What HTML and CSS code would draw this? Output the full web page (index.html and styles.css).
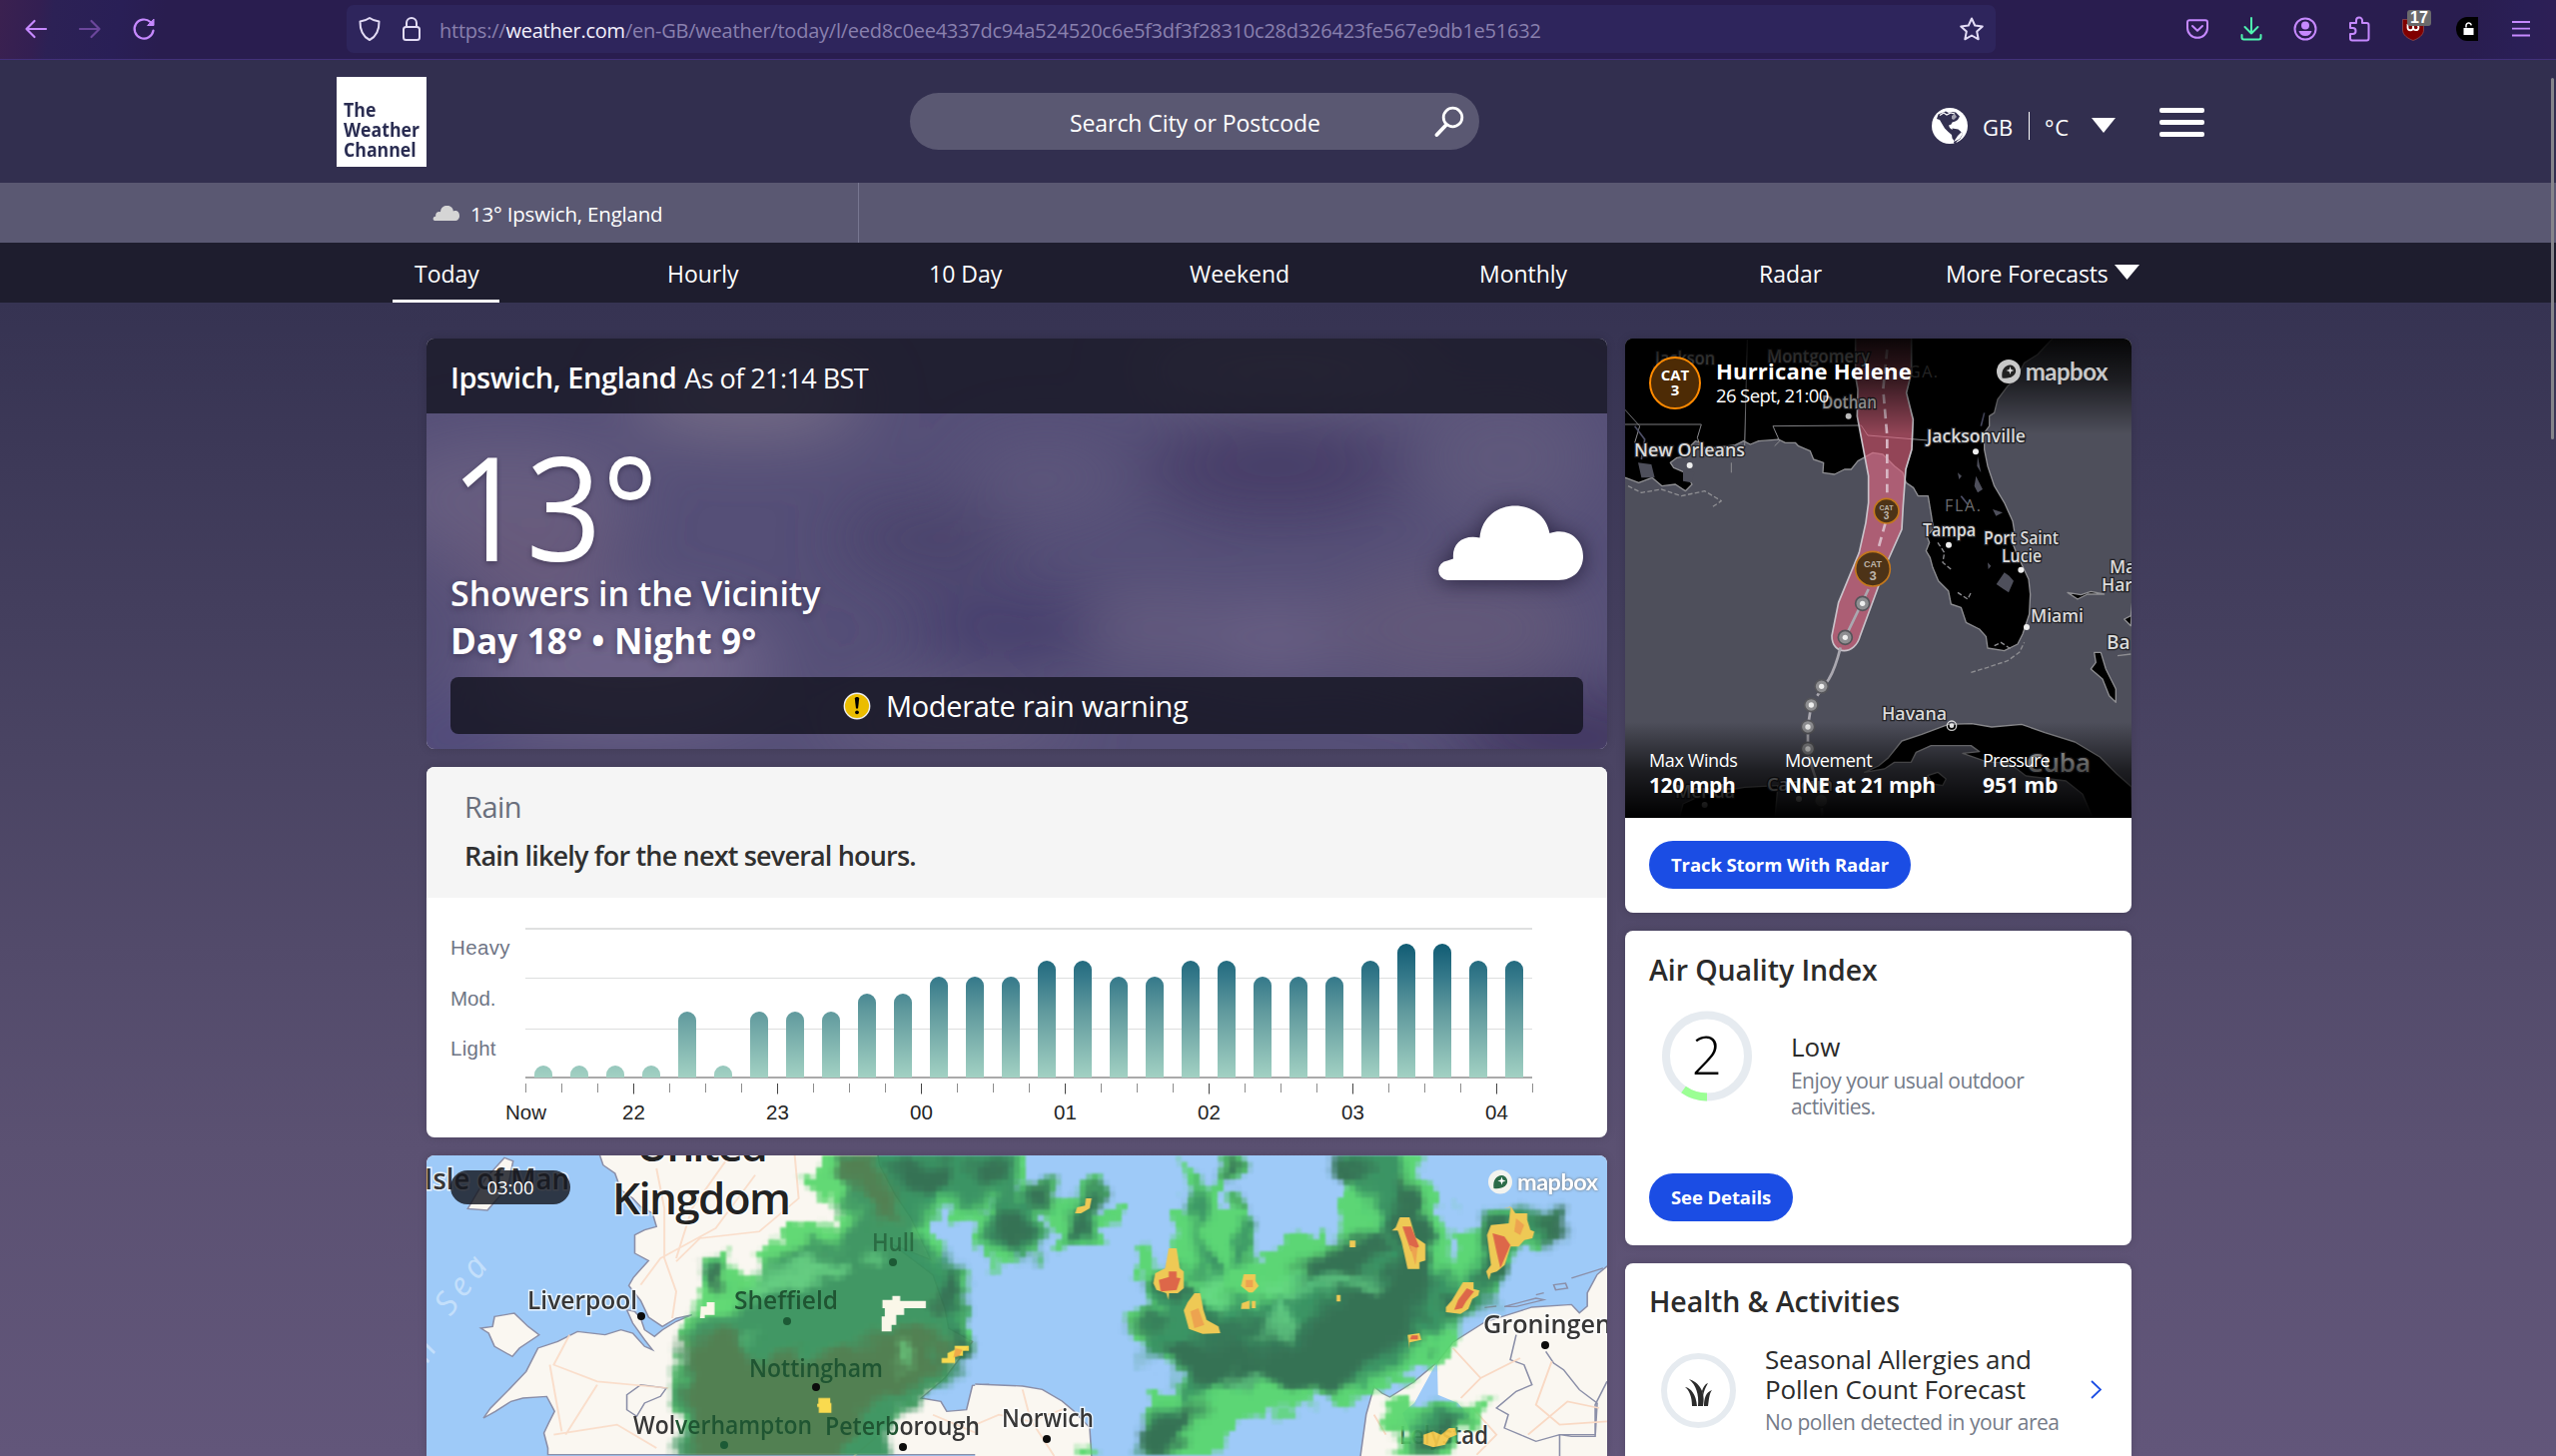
FILE: index.html
```html
<!DOCTYPE html>
<html lang="en-GB">
<head>
<meta charset="utf-8">
<title>Weather today in Ipswich, England</title>
<link rel="stylesheet" href="styles.css">
</head>
<body>
<div class="browser-bar">
  <div class="nav-buttons">
    <svg width="24" height="24" viewBox="0 0 24 24" fill="none" stroke="#c689ff" stroke-width="2.2" stroke-linecap="round" stroke-linejoin="round"><path d="M22 12H2.500M10.500 4l-8 8 8 8"/></svg>
    <svg width="24" height="24" viewBox="0 0 24 24" fill="none" stroke="#6b469b" stroke-width="2.2" stroke-linecap="round" stroke-linejoin="round"><path d="M2 12h19.500M13.500 4l8 8-8 8"/></svg>
    <svg width="24" height="24" viewBox="0 0 24 24" fill="none" stroke="#c689ff" stroke-width="2.200" stroke-linecap="round" stroke-linejoin="round"><path d="M21.500 13.500A9.500 9.500 0 1 1 18.500 5L21 7.500"/><path d="M22 2.500v6h-6z" fill="#c689ff" stroke-width="1"/></svg>
  </div>
  <div class="url-bar">
    <svg width="24" height="26" viewBox="0 0 24 26" fill="none" stroke="#e3dcf5" stroke-width="2" stroke-linejoin="round"><path d="M12 2c3 2.200 6 3 9.500 3.400C21.700 14 19.500 20 12 24 4.500 20 2.300 14 2.500 5.400 6 5 9 4.200 12 2z"/></svg>
    <svg width="20" height="26" viewBox="0 0 20 26" fill="none" stroke="#e3dcf5" stroke-width="2"><rect x="2" y="11" width="16" height="13" rx="2.500"/><path d="M5 11V7a5 5 0 0 1 10 0v4"/></svg>
    <span class="url">https://<b>weather.com</b>/en-GB/weather/today/l/eed8c0ee4337dc94a524520c6e5f3df3f28310c28d326423fe567e9db1e51632</span>
    <svg class="star" width="26" height="26" viewBox="0 0 26 26" fill="none" stroke="#e3dcf5" stroke-width="2" stroke-linejoin="round"><path d="M13 2.500l3.200 7 7.600.9-5.600 5.200 1.500 7.700L13 19.500l-6.700 3.800 1.500-7.700-5.600-5.200 7.600-.9z"/></svg>
  </div>
  <div class="tools">
    <span><svg width="22" height="20" viewBox="0 0 22 20" fill="none" stroke="#c689ff" stroke-width="2" stroke-linecap="round" stroke-linejoin="round"><path d="M3 1.200h16a2 2 0 0 1 2 2V9a10 9.800 0 0 1-20 0V3.200a2 2 0 0 1 2-2z"/><path d="M6 7l5 4.700L16 7"/></svg></span>
    <span><svg width="22" height="24" viewBox="0 0 22 24" fill="none" stroke="#4ff5b0" stroke-width="2" stroke-linecap="round" stroke-linejoin="round"><path d="M11 1v15.500M4.500 10l6.500 6.500 6.500-6.500M1.500 18v2.500a2 2 0 0 0 2 2h15a2 2 0 0 0 2-2V18"/></svg></span>
    <span><svg width="24" height="24" viewBox="0 0 24 24" fill="#c689ff"><circle cx="12" cy="12" r="10.500" fill="none" stroke="#c689ff" stroke-width="2"/><circle cx="12" cy="8.500" r="4"/><path d="M5.500 14h13a6.700 6.700 0 0 1-13 0z"/></svg></span>
    <span><svg width="22" height="26" viewBox="0 0 22 26" fill="none" stroke="#c689ff" stroke-width="2" stroke-linejoin="round"><path d="M2 7h6V4.500a3 3 0 0 1 6 0V7h4.500a2 2 0 0 1 2 2v13.500a2 2 0 0 1-2 2H4a2 2 0 0 1-2-2V18h2.500a3 3 0 0 0 0-6H2z"/></svg></span>
    <span class="shield"><svg width="22" height="24" viewBox="0 0 22 24"><path d="M.5 2.500h21V13c0 5-5 8.500-10.500 10.500C5.500 21.500.5 18 .5 13z" fill="#800000" stroke="#a06060" stroke-width=".6"/><path d="M5.500 7v3.500a2.700 2.700 0 0 0 5.500 0V8m0 2.500a2.700 2.700 0 1 0 3-2.700" fill="none" stroke="#fff" stroke-width="1.800"/></svg><i>17</i></span>
    <span><svg width="22" height="24" viewBox="0 0 22 24"><path d="M22 0H11A11 12 0 0 0 11 24H22z"/><rect x="7.500" y="11" width="10" height="7" fill="#fff"/><path d="M10 10.500V9a2.600 2.600 0 0 1 5.200-.6" fill="none" stroke="#fff" stroke-width="1.500"/></svg></span>
    <span><svg width="18" height="16" viewBox="0 0 18 16" stroke="#c689ff" stroke-width="1.800"><path d="M0 1h18M0 7.700h18M0 14.500h18"/></svg></span>
  </div>
</div>

<header class="site-head">
  <div class="logo"><span>The<br>Weather<br>Channel</span></div>
  <div class="search"><span class="search-text">Search City or Postcode</span>
    <svg width="30" height="32" viewBox="0 0 30 32" fill="none" stroke="#fff" stroke-linecap="round"><circle cx="18.500" cy="11.500" r="9.300" stroke-width="2.800"/><path d="M11.500 19.500L2.500 29" stroke-width="3.800"/></svg>
  </div>
  <div class="locale">
    <svg class="globe" width="36" height="36" viewBox="0 0 36 36"><circle cx="18" cy="18" r="18" fill="#fff"/><path d="M6.500 6.500L14 3.500l3 1.500 3-1 4 .5 2 2 2 2-2 3.500-2.500 1.500-3 1-1 2-2.500 1 1 2.500 2.500 2 3 .5 3 2 4 2.500-2 4-3.500 2.500-1.500 3.500-1.500 2.500 1-6-2.500-3-.5-3.500-3.500-3-3.500-3.500-3-5-2-3.500L5 11z" fill="#322f4f"/><path d="M8 7.500l4-2.500 3 2 4-2 4 1" stroke="#fff" stroke-width="1.200" fill="none"/><path d="M20 8l3-2 2 3-3 3-2-1z" fill="#fff" opacity=".55"/><path d="M20.500 20.500l6 1 4.500 4-3 4.500-3.500 4-2.500 1.500 1-7-2.500-4z" fill="#322f4f"/><path d="M22 34l4-6 4-4 1 2-3 5z" fill="#fff"/></svg>
    <span class="gb">GB</span><span class="rule"></span><span class="deg">°C</span>
    <svg class="tri" width="24" height="15"><path d="M0 0h24L12 15z" fill="#fff"/></svg>
    <div class="burger"><i></i><i></i><i></i></div>
  </div>
</header>

<div class="places">
  <div class="place"><svg width="27" height="15" viewBox="0 0 146 75" preserveAspectRatio="none"><path d="M11 75a10 10 0 0 1 6-20C15 35 28 27 43 31 45-10 108-12 113 27 138 20 146 36 146 51c0 12-8 24-26 24z" fill="#d5d5d5"/></svg><span class="place-text">13° Ipswich, England</span></div>
</div>

<nav class="tabs">
  <a class="on"><span>Today</span></a><a><span>Hourly</span></a><a><span>10 Day</span></a><a><span>Weekend</span></a><a><span>Monthly</span></a><a><span>Radar</span></a><a class="more"><span>More Forecasts</span><svg width="25" height="15"><path d="M0 0h25L12.500 15z" fill="#fff"/></svg></a>
</nav>

<main>
  <div class="left">
    <section class="card current">
      <svg class="sky" width="1182" height="411" viewBox="0 0 1182 411">
        <defs><filter id="soft" x="-50%" y="-50%" width="200%" height="200%"><feGaussianBlur stdDeviation="32"/></filter></defs>
        <rect width="1182" height="411" fill="#554f77"/>
        <g filter="url(#soft)">
          <ellipse cx="80" cy="160" rx="130" ry="60" fill="#665d80"/><ellipse cx="200" cy="330" rx="150" ry="60" fill="#70658a"/>
          <ellipse cx="110" cy="220" rx="80" ry="50" fill="#685a7c"/><ellipse cx="320" cy="60" rx="120" ry="40" fill="#746c86"/>
          <ellipse cx="500" cy="200" rx="90" ry="35" fill="#48426b"/><ellipse cx="590" cy="290" rx="110" ry="35" fill="#453e6c"/>
          <ellipse cx="620" cy="140" rx="80" ry="35" fill="#5d567b"/><ellipse cx="850" cy="130" rx="130" ry="50" fill="#463e68"/>
          <ellipse cx="860" cy="30" rx="160" ry="25" fill="#706b86"/><ellipse cx="730" cy="290" rx="70" ry="30" fill="#665d80"/>
          <ellipse cx="850" cy="300" rx="80" ry="35" fill="#6b6084"/><ellipse cx="1080" cy="120" rx="90" ry="70" fill="#5f587c"/>
          <ellipse cx="1030" cy="290" rx="130" ry="60" fill="#625979"/><ellipse cx="1150" cy="400" rx="120" ry="40" fill="#40365f"/>
          <ellipse cx="20" cy="400" rx="70" ry="25" fill="#4f487d"/><ellipse cx="520" cy="385" rx="130" ry="25" fill="#665d80"/>
        </g>
      </svg>
      <div class="current-head"><h1 class="city">Ipswich, England</h1><span class="asof">As of 21:14 BST</span></div>
      <div class="current-body">
        <div class="facts">
          <div class="temp">13°</div>
          <div class="phrase">Showers in the Vicinity</div>
          <div class="hilo">Day 18° • Night 9°</div>
        </div>
        <svg class="cloud" width="146" height="75" viewBox="0 0 146 75"><path d="M10 74a9.800 9.800 0 0 1 0-19.500l6-2C14.500 38 25 28 42.500 31.500 46 -10 106 -11 112.500 27 132 20.500 146 34 146 50c0 13-9 24-25 24z" fill="#fff"/></svg>
      </div>
      <div class="warning"><svg width="28" height="28" viewBox="0 0 28 28"><circle cx="14" cy="14" r="12.700" fill="#ebbd00" stroke="#eee" stroke-width="1.400"/><path d="M11.800 6.500c0-2 4.400-2 4.400 0L15 16.500h-2z"/><circle cx="14" cy="20.300" r="1.900"/></svg><span class="warn-text">Moderate rain warning</span></div>
    </section>

    <section class="card rain">
      <div class="rain-head"><h2>Rain</h2><p>Rain likely for the next several hours.</p></div>
      <svg class="chart" width="1182" height="240" viewBox="427 899 1182 240">
        <defs><linearGradient id="bar" gradientUnits="userSpaceOnUse" x1="0" y1="945" x2="0" y2="1079"><stop offset="0" stop-color="#115c74"/><stop offset=".25" stop-color="#35798a"/><stop offset=".5" stop-color="#5f999d"/><stop offset="1" stop-color="#a2d1c3"/></linearGradient></defs>
        <path d="M526 930h1008" stroke="#dfe0e0" stroke-width="2"/><path d="M526 979.500h1008M526 1030.500h1008" stroke="#dddede"/><path d="M526 1079h1008" stroke="#aaa" stroke-width="2"/>
        <g class="axis-y"><text x="451" y="956" textLength="59.500">Heavy</text><text x="451" y="1007" textLength="45.500">Mod.</text><text x="451" y="1057" textLength="45.500">Light</text></g>
        <g id="bars" fill="url(#bar)"></g><g id="ticks"></g>
        <g class="axis-x" text-anchor="middle"><text x="526.500" y="1121">Now</text><text x="634.500" y="1121">22</text><text x="778.500" y="1121">23</text><text x="922.500" y="1121">00</text><text x="1066.500" y="1121">01</text><text x="1210.500" y="1121">02</text><text x="1354.500" y="1121">03</text><text x="1498.500" y="1121">04</text></g>
      </svg>
    </section>

    <section class="card radar">
      <svg width="1182" height="301" viewBox="0 0 1182 301">
        <defs>
          <filter id="b1" x="-5%" y="-5%" width="110%" height="110%"><feGaussianBlur stdDeviation="1.600"/></filter>
          <filter id="b2" x="-10%" y="-10%" width="120%" height="120%"><feGaussianBlur stdDeviation="5"/></filter>
          <!-- Radar returns come in 6px cells with ragged edges -->
          <filter id="cells" filterUnits="userSpaceOnUse" x="0" y="0" width="1182" height="301" color-interpolation-filters="sRGB">
            <feTurbulence type="fractalNoise" baseFrequency=".035" numOctaves="2" seed="4" result="n"/>
            <feDisplacementMap in="SourceGraphic" in2="n" scale="34" xChannelSelector="R" yChannelSelector="G" result="d"/>
            <feFlood x="2" y="2" width="2" height="2" flood-color="#000"/>
            <feComposite x="0" y="0" width="6" height="6"/>
            <feTile result="grid"/>
            <feComposite in="d" in2="grid" operator="in"/>
            <feMorphology operator="dilate" radius="2"/>
            <feGaussianBlur stdDeviation="1"/>
          </filter>
        </defs>
        <rect width="1182" height="301" fill="#9ecaf8"/>
        <g class="sea-name"><text transform="translate(1 209) rotate(-58)">n</text><text transform="translate(24 162) rotate(-53)" textLength="64">Sea</text></g>
        <g transform="translate(-7 -7) scale(.39541 .33333)">
          <g fill="#faf7f1" stroke="#8b8fa8" stroke-width="4">
            <path d="M455 15l10 35 30 25 15 50 30 25 20 25 30 20 10 40-30 10-25 15v55l35 22-38 50-12 25 30 45 20 50 35 28 35-25 40-10-40 20-35 25-20 20-25-20-10-35-15-20-20-5 15 40 30 50 20 30-20-10-30-40-30-10-40 15-70-10-50 30-50 20-30 70-40 50-50 60-18 30 30-20 40-30 30-10 60-5 20 45-15 35-12 30 10 45v20H1440V709l-40 3-15 73-50 5-15-30-50-10 60-60 70-110-60-40-10-60-30-100-100-90 95 45-50-125-40-70-40-90-10-69z"/>
            <path d="M190 505l50-10 35 40 28 25-50 40-18 25-45-30-15-40-20-15 30-5zM215 28l22 10-10 60-20 40-35 48-50-5 20-40 25-50zM525 740l35-30 65 10-15 25-40 20-20 40-25-20z"/>
          </g>
          <g fill="none" stroke="#f9d9c4" stroke-width="5" opacity=".85"><path d="M600 60l20 120 0 150 30 100-10 80M780 30l-90 150-40 150M950 20l10 130-100 100-150 20-60 70M850 80l-100 160-140 90-50 80M330 650l30 200M380 560l-40 90 110 50 180 20M600 900l-100-70-160 30M370 860l80-150M1100 924l60-60M1300 800l120 60"/></g>
        </g>
        <g transform="translate(573 -7) scale(.39541 .33333)">
          <path d="M-60 708l120 6 50 10 50 35 30 30 40 50 5 90H-60z" fill="#faf7f1"/>
          <path d="M-60 708l120 6 50 10 50 35 30 30 40 50 5 90" fill="none" stroke="#8b8fa8" stroke-width="4"/>
          <path d="M-60 830l60-30 80 20 90-40M60 724l20 90 60 110" fill="none" stroke="#f9d9c4" stroke-width="5" opacity=".85"/>
          <g fill="#faf7f1" stroke="#8b8fa8" stroke-width="4">
            <path d="M915 930l15-130 20-85 20 20 20 12 60-45 60-60 40-60 80-60 120-45 100-8 20 25 20-20 0-40 25-55 40-40V930z"/>
            <path d="M1280 475l80-25 20 5-70 20zM1405 410l30-5 5 15-30 5zM1450 390l80-30M1230 478l30-4M1360 440l20-6" fill="none"/>
            <path d="M1310 560l-15 75 35 15 20 60-40 20-50 50 30 20-10 40 40 20 40 20 60-20 30 5h60l5-100-45-40-40-60-25-20-20-35M1540 700l-30 70v90h-90v70" fill="none"/>
          </g>
          <path d="M1110 640l2 100 50 25 30 40-60 50-90 0-20-60 30-30z" fill="#9ecaf8"/>
          <g fill="none" stroke="#f9d9c4" stroke-width="5"><path d="M1150 600l70 90 100-60M1220 690l-50 60M1400 640l-40 130 60 60 120-10M1340 860l100-100 80 20M950 800l30 60M1200 780l60 80-50 60"/></g>
        </g>
        <g class="map-label under"><text class="iom" x="-2" y="34" textLength="145" lengthAdjust="spacingAndGlyphs">Isle of Man</text><text x="974" y="289" textLength="89" lengthAdjust="spacingAndGlyphs">Lelystad</text></g>
        <g class="map-label big"><text x="210" y="6" textLength="132">United</text><text x="186" y="59" textLength="179">Kingdom</text></g>

        <g opacity=".94">
         <g filter="url(#cells)">
          <g filter="url(#b1)" fill="#59d76c">
            <g transform="translate(-7 -7) scale(.39541 .33333)">
              <path d="M1010-30h520v110h-20v40h-35v30h-40v30h-30v50h-40v-40h-60l-15 50h20v40h15v85h65v60h-15v115h30v80h-30v30h-40v40h-30v35h-50v40h-30v40h-40v30h-20v40H655V625h25v-30h-12v-80h20v-75h12v-75h20v-55h75v60h65v-65h15v-25h45v-25h25v-20h115v-45h20v-40h-80v-30h-25v-50h30z"/>
              <path d="M1400 210v-25h35v-15h60v-30h25v-40h48v220h-50v35h-40v-30h-45v-50h-20z"/>
            </g>
            <g transform="translate(573 -7) scale(.39541 .33333)">
              <path d="M-10-25h75v120h-40v100h30v80h-15v40h-25v50h-35zM40 150h30v-50h80v50h40v-50h70v80h50v40h-40v75H155v-40h-40v-60h-50v60H30z"/>
              <path d="M470 40l20 55h60v-70h55v70H565v90h20v-40h40v110h25v100h20v-60h50v-30h90V220h25v60h30V170h20V-20h190v120h35v90h30v140h20v-80h55l20-60 50-15 60 30h60v60h-30v40h-60v40h-50v90h-60v80h-50v80l-50 60h-60v50h-60v30h-70l-20 40h-50l-20-25h-30v25l-60 20h-60v20h-50v40h-50v30h-30l-20 60v40h-60l-20 25h-70V740h70v-75h-30v-80H325v-80h60V370h-40v-70h50v60h40V190h55v-75h-30z"/>
              <path d="M980 790l40-30 80 10 60-20 40 20 60-40-50 80-40 60-30 80H1010v-100h-30zM210 905h55v25h-55z"/>
            </g>
          </g>
          <g filter="url(#b2)" fill="#36915a">
            <g transform="translate(-7 -7) scale(.39541 .33333)">
              <path d="M1040-20h460v100l-60 50-40 60-80-30-60 50 10 70 50 70h50l10 70-10 100 20 100-50 80-100 80-40 60-30 140H660V620l30-100 100-30 60-120 70-50 120-40 60-60-20-70z"/>
              <path d="M1420 200l60-15 70-60 20 180-60 30-60-30z"/><path d="M715 330h60v80h-70z"/>
            </g>
            <g transform="translate(573 -7) scale(.39541 .33333)">
              <path d="M-10 0h50v120l20 80-30 100-40 20zM70 110h70v70H60zM200 120h60v80l-20 80-70-10z"/>
              <path d="M490 110h45v80l-30 60 10 40 60 60-10 60-70-40zM600 230h40v100h-40zM840-20h180v190l80 60v100l60 60-20 120-80 80-60 90-100 30-280-10-120 50-100 60-60 170H330l20-80 100-60 10-80-20-130-80-10V520l40-20-20-100 60-40 100 100h150l100-80 60-60 120-60V220l-40-80zM1220 200l90-20 100 20-20 80-90 20-30 100-80 120-60 10 10-80 80-90z"/>
              <path d="M1020 830l80-50h80l-60 150h-80z"/>
            </g>
          </g>
          <g filter="url(#b2)" fill="#2f6c49">
            <g transform="translate(-7 -7) scale(.39541 .33333)">
              <path d="M1190 40l160-10 10 70-60 50-80-30zM1400 20h80v70l-60 10zM1460 210h80v90h-70zM1320 380l50 0-15 130-50-60zM1340 570h60v60l-60 30zM725 360l50-10v70h-50z"/>
              <path d="M1060 30l80 10 70 110-10 70-50-20-20-70-70-50zM670 570l120-30 60 100 240-40 120-60 90-30v80l50 40-100 90-130 70-60 200H700z" fill="#467846"/>
            </g>
            <g transform="translate(573 -7) scale(.39541 .33333)">
              <path d="M-10 190h60v90h-60zM80 110h60v60H80zM210 120h50v60h-30v80h-50v-60h30zM560 30h35v60h-35zM600 150h20v30h-20z"/>
              <path d="M840 20h80l20 60-60 20zM1000 100h50v100h50v110l-20 100-40 130-60 70-70 80-60 50-60-10-60-10-120-20-80 30-80-60-20-80 60-30 80 30 100 30 110-50 60-80 80-80 80-50zM730 380l100-80 150-60v70l-100 80zM330 530h90v25h-90zM400 380h60v70h-40zM350 850l110-70 60-20-50 120-90 60zM1230 210h50v150l-50 60zM1130 440h60v60h-60zM1380 190h50v80h-50zM1040 560h40v40h-40zM1040 860l100-50 30 20-60 90h-50z"/>
              <path d="M430 330l60 60 50 110 80 0 60 20 100-20 60-70 100-60 100 20 40-60 30 60-30 110-80 110-100 50-200-10-80 30-60-50-60-100z" opacity=".75"/>
            </g>
          </g>
          <g filter="url(#b2)" fill="#68dc83" opacity=".75"><g transform="translate(573 -7) scale(.39541 .33333)"><path d="M690 400h90l100-20h80l-10 25-100 15-150 15h-90zM570 680h100v30H570zM510 400h50l20 60h-40zM700 450l50 40-30 70-90 30 60-60z"/></g><g transform="translate(-7 -7) scale(.39541 .33333)"><path d="M820 380l150-40 100-10 20 40-120 50-130 20zM1120 290l50 30-20 40zM1210 590l35-10v80h-30zM820 560l30 10v30z"/></g></g>
         </g>
          <g transform="translate(-7 -7) scale(.39541 .33333)">
            <path d="M1172 455h25v-12h20v15h65v22h-55v20h-20v30h-12v20h-25v-45h8v-25h-6zM712 475h15v-13h20v38h-25v10h-12z" fill="#faf7e8" filter="url(#b1)"/>
            <path d="M1355 605v-12h36v15h-15v15h-20v22h-34v-15h15v-15zM1010 750h30v15h3v30h-32v-18h-4v-10h3z" fill="#f9d844"/><path d="M1357 600l18 5-8 18-15 5z" fill="#efa53d"/>
          </g>
          <g transform="translate(573 -7) scale(.39541 .33333)">
            <g fill="#f4c94a"><path d="M430 300h20l8 60 10 10v50l-15 15h-22l-2 20-5-20-25-10-8-20 5-30 25-15zM495 435h15l8 50 8 30 30 20 5 20-45 2-35-15-13-55 10-25zM620 378h30v20l8 15-15 20h-10l-20-20zM615 465l20-8v25h-22zM640 458h10v22h-10zM220 150h15l-5 30-22 15h-15l5-18 20-5zM888 277h15v20h-15zM855 440h10v20h-10zM1015 207h25l15 60 25 20v50l-15 5v20h-30l-15-80-10-35h-15l10-10zM1278 180l20-3 10 18h30v20l8 30 10 5-5 20-20 5-15 20h-20l-15 55-20 20-15 5-5 20-7-25 12-20-10-90 10-30 45-5 5-50zM1175 402h27v20l15 5-3 15-15 10-10 30-20 15-37-5v-15l15-20zM1035 560l30-5 5 20-30 8v20zM1075 860l25-10 20 10 20-20 15 0 5 20-20 10-10 20-30 8-25-10z"/></g>
            <g filter="url(#b1)" fill="#e2603c"><path d="M405 395l30-10 25 5-10 35-40 5zM430 370h20v30h-20zM1022 235h22l20 60-20 15zM1250 255l30 10 15 25-25 70-10-50zM1185 420l18 10-20 30-10 20-20 5 10-30zM1045 562h16v12h-20z"/></g>
            <g filter="url(#b1)" fill="#f3a044"><path d="M485 490l20-10 15 50-25 10zM1040 290l20 10-5 50zM1310 210l20 20-10 30-15-10zM625 395h18v22h-18z"/></g>
          </g>
        </g>
        <g class="map-label"><text x="101" y="154" textLength="110" lengthAdjust="spacingAndGlyphs">Liverpool</text><text x="576" y="272" textLength="92" lengthAdjust="spacingAndGlyphs">Norwich</text><text x="1058" y="178" textLength="128" lengthAdjust="spacingAndGlyphs">Groningen</text></g>
        <g class="map-label wet"><text x="308" y="154" textLength="104" lengthAdjust="spacingAndGlyphs">Sheffield</text><text class="faint" x="446" y="96" textLength="43" lengthAdjust="spacingAndGlyphs">Hull</text><text x="323" y="222" textLength="134" lengthAdjust="spacingAndGlyphs">Nottingham</text><text x="207" y="279" textLength="179" lengthAdjust="spacingAndGlyphs"><tspan fill="#373737">Wol</tspan>verhampton</text><text x="399" y="280" textLength="155" lengthAdjust="spacingAndGlyphs">Peterb<tspan fill="#373737">orough</tspan></text></g>
        <g fill="#0c0c0c"><circle cx="215" cy="161" r="4"/><circle cx="390" cy="232" r="4"/><circle cx="477" cy="292" r="4"/><circle cx="621" cy="284" r="4"/><circle cx="1120" cy="190" r="4"/></g><g fill="#1c5a35"><circle cx="361" cy="166" r="4"/><circle cx="298" cy="290" r="4"/><circle cx="467" cy="107" r="4"/></g>
      </svg>
      <span class="time-pill">03:00</span>
      <span class="mapbox mb-radar"><svg width="24" height="25" viewBox="0 0 24 24"><circle cx="12" cy="12" r="12" fill="#f3f3ee"/><path d="M5.500 18.500C4 10 9 5 14 5.500c5 1 7 7 3 10.500-3 2.500-7 3-11.500 2.500z" fill="#2b6b48"/><path d="M13.500 7l1 3 3 1-3 1-1 3-1-3-3-1 3-1z" fill="#fff"/></svg><span>mapbox</span></span>
    </section>
  </div>

  <aside class="right">
    <section class="card storm">
      <div class="storm-map">
        <svg width="507" height="480" viewBox="0 0 507 480">
          <defs>
            <linearGradient id="shade" x1="0" y1="0" x2="0" y2="1"><stop offset="0" stop-opacity=".92"/><stop offset=".09" stop-opacity=".62"/><stop offset=".2" stop-opacity="0"/><stop offset=".8" stop-opacity="0"/><stop offset=".9" stop-opacity=".62"/><stop offset="1" stop-opacity="1"/></linearGradient>
          </defs>
          <rect width="507" height="480" fill="#4e4f5b"/>
          <g transform="translate(-7 -9) scale(.33333)">
            <g stroke="#8e8e92" stroke-width="4" stroke-linejoin="round">
              <path d="M0 0h1330l-70 75-40 25-20 40-30 30-30 40-10 40-15 10 0 30-15 20 0 50 10 50 20 60 30 50 25 55 5 30-12 20 20 50 35 75 5 45-3 60-20 60-15 30-40 20-50-8-5-35-20-22-40-20-15-45-30-10-8-40-30-30-17-40-8-30-12-20 10-25-8-20 20-20-6-40-10-60-30 0-14-25-22-15-10-30-25-20-35-35-30-5-45 25-20 25-20 0-30 15-35-5 2-30-30-10-10-25-35-15-10-10-30 0-20-10-60 5-25 10-20-10-25 12-60 8-60 0 20-15-20-5-15 15-10 30-30 5-20 15 10 15 35 15 20 35-20 20-30-20-40 5-30-25-40 15-40-15-30 10-30-20-50 5z" fill="#000"/>
              <path d="M740 1330l60-10 30-20 50 0 15-30 45-20 120 0 25 18-50 5 70 25 70 5 50 38 120 15 50 40 30 70h117v-92l-45-40-50-50-75-45-90-28-70-25-90 8-60-10-70 2-80 30-60 20-40 50-30 25zM180 1480l15-55 65-30 120-20 100-5-10 110zM930 1340l30-10 25 20-10 20-30-5zM1350 790l30 20 30-15 50 0-40-8-30 10zM1430 970l20 0 15 50 30 60 0 40-20-20-20-50-35-30 15-20zM1545 810l-5 50-20 10 20 20zM1500 980l40-5" fill="#000"/>
              <path d="M20 285h230l-12 40 15 40M380 350l8-320M470 350l15-15-20-45 265-2 20 30 180 15M20 240l45 50-15 50M340 400l0 30" fill="none" stroke-width="3"/>
              <path d="M30 470l40 20 60-10 60 20 70-15 50 30-30 20M1060 1030l50-15 60-20 35-25 15-30M1020 790l30 20 10-20M960 640l20 30-5 30 25 20M1130 950l20-10 30 20" fill="none" stroke-dasharray="14 7"/>
            </g>
            <g fill="#4e4f5b"><path d="M1160 730l15 10 13 15-15 35-15-10-22-15zM1020 430l12 10-8 10zM1110 700l10 10-8 10zM1075 440l20 40-15 10-10-20zM60 400l40 5 10 40-40 0zM195 420l35 10-10 30-25-5zM1080 380l10 50-12-20zM1125 540l30 10-20 10z"/><path d="M50 290l30 40-10 60M1030 500l20 25M1100 250l-10 40" stroke="#4e5068" stroke-width="5" fill="none"/></g>
            <path d="M713 0v140l7 40-2 80 17 90 17 90 0 80-8 60-20 90-62 150-20 100c0 60 70 60 85 0l85-230 40-90 4-70 8-110 18-60 4-90-20-80 15-60V0z" fill="#d96580" fill-opacity=".68" stroke="#c8c3ca" stroke-width="5"/>
            <path d="M808 60l-12 120 12 140v170M803 580l-25 90" fill="none" stroke="#d8b7c4" stroke-width="8" stroke-dasharray="28 17"/>
            <path d="M752 780L682 925M668 955c-10 40-20 70-35 95l-35 50M580 1128l-10 65v70c5 40 15 60 40 130l3 80" fill="none" stroke="#aaa8b0" stroke-width="8"/>
            <g fill="#8e8e91" stroke="#55555a" stroke-width="5"><circle cx="734" cy="823" r="21"/><circle cx="682" cy="925" r="21"/><circle cx="611" cy="1072" r="20"/><circle cx="580" cy="1128" r="20"/><circle cx="570" cy="1194" r="20"/><circle cx="570" cy="1260" r="20"/><circle cx="610" cy="1415" r="20"/></g>
            <g fill="#eee"><circle cx="734" cy="823" r="8"/><circle cx="682" cy="925" r="8"/><circle cx="611" cy="1072" r="8"/><circle cx="580" cy="1128" r="8"/><circle cx="570" cy="1194" r="8"/><circle cx="570" cy="1260" r="8"/><circle cx="215" cy="408" r="9"/><circle cx="692" cy="260" r="9"/><circle cx="1074" cy="367" r="9"/><circle cx="993" cy="647" r="9"/><circle cx="1210" cy="722" r="9"/><circle cx="1227" cy="894" r="9"/><circle cx="1002" cy="1190" r="7"/><circle cx="543" cy="1410" r="9"/><circle cx="260" cy="1428" r="9"/></g>
            <circle cx="1002" cy="1190" r="14" fill="none" stroke="#ddd" stroke-width="4"/>
            <g fill="#4d3317" stroke="#c4781c" stroke-width="5"><circle cx="806" cy="545" r="37"/><circle cx="765" cy="719" r="52"/></g>
          </g>
          <g class="cat" text-anchor="middle"><text x="261.500" y="172" font-size="7">CAT</text><text x="261.500" y="180.500" font-size="10">3</text><text x="248" y="229" font-size="9">CAT</text><text x="248" y="242" font-size="13">3</text></g>
          <g class="storm-label">
            <text x="30" y="26" textLength="60" lengthAdjust="spacingAndGlyphs">Jackson</text><text x="142" y="24" textLength="103" lengthAdjust="spacingAndGlyphs">Montgomery</text><text x="197" y="70" textLength="55" lengthAdjust="spacingAndGlyphs">Dothan</text>
            <text x="9" y="118" textLength="111" lengthAdjust="spacingAndGlyphs">New Orleans</text><text x="302" y="104" textLength="99" lengthAdjust="spacingAndGlyphs">Jacksonville</text><text x="298" y="198" textLength="53" lengthAdjust="spacingAndGlyphs">Tampa</text>
            <text x="359" y="206" textLength="75" lengthAdjust="spacingAndGlyphs">Port Saint</text><text x="377" y="224" textLength="40" lengthAdjust="spacingAndGlyphs">Lucie</text><text x="406" y="284" textLength="53" lengthAdjust="spacingAndGlyphs">Miami</text><text x="485" y="235">Ma</text><text x="477" y="253">Harl</text>
            <text class="lg" x="482" y="311">Ba</text><text x="257" y="382" textLength="65" lengthAdjust="spacingAndGlyphs">Havana</text><text x="50" y="460" textLength="60" lengthAdjust="spacingAndGlyphs">Merida</text><text x="142" y="453" textLength="66" lengthAdjust="spacingAndGlyphs">Cancun</text><text class="cuba" x="402" y="434" textLength="64" lengthAdjust="spacingAndGlyphs">Cuba</text>
          </g>
          <g class="state"><text x="320" y="173" textLength="36">FLA.</text><text x="284" y="39" textLength="29">GA.</text></g>
          <rect width="507" height="480" fill="url(#shade)"/>
        </svg>
        <div class="storm-over">
          <div class="storm-top">
            <div class="badge"><span>CAT</span><span>3</span></div>
            <div class="storm-name"><div class="hh">Hurricane Helene</div><div class="hd">26 Sept, 21:00</div></div>
            <span class="mapbox mb-storm"><svg width="24" height="24" viewBox="0 0 24 24"><circle cx="12" cy="12" r="12" fill="#c8c8c8"/><path d="M5.500 18.500C4 10 9 5 14 5.500c5 1 7 7 3 10.500-3 2.500-7 3-11.500 2.500z" fill="#222"/><path d="M13.500 7l1 3 3 1-3 1-1 3-1-3-3-1 3-1z" fill="#ddd"/></svg><span>mapbox</span></span>
          </div>
          <dl class="stats"><div><dt>Max Winds</dt><dd>120 mph</dd></div><div><dt>Movement</dt><dd>NNE at 21 mph</dd></div><div><dt>Pressure</dt><dd>951 mb</dd></div></dl>
        </div>
      </div>
      <a class="btn">Track Storm With Radar</a>
    </section>

    <section class="card aqi">
      <h2>Air Quality Index</h2>
      <div class="aqi-row">
        <svg width="90" height="91" viewBox="0 0 90 91"><circle cx="45" cy="45.500" r="41" fill="none" stroke="#e6ebf0" stroke-width="8"/><path d="M45 86.500A41 41 0 0 1 21.500 79" fill="none" stroke="#9bff94" stroke-width="8"/><text x="45" y="64" text-anchor="middle" class="aqi-num">2</text></svg>
        <div class="aqi-text"><h3>Low</h3><p>Enjoy your usual outdoor<br>activities.</p></div>
      </div>
      <a class="btn">See Details</a>
    </section>

    <section class="card health">
      <h2>Health &amp; Activities</h2>
      <div class="health-row">
        <svg width="75" height="75" viewBox="0 0 75 75"><circle cx="37.500" cy="37.500" r="34.500" fill="none" stroke="#e6ebf0" stroke-width="6"/><g fill="#2b2b2b"><path d="M31 53C31 43 28 37 24 34c6 1 11 7 12 19z"/><path d="M37 53c1-12-2-21-9-27 10 3 17 13 14 27z"/><path d="M41 38c1-4 3-7 6-8-3 5-4 8-5 13z"/><path d="M43 53c0-8 2-14 8-16-3 4-3 10-4 16z"/></g></svg>
        <div class="health-text"><h3>Seasonal Allergies and<br>Pollen Count Forecast</h3><p>No pollen detected in your area</p></div>
        <svg class="chev" width="11" height="19" viewBox="0 0 11 19" fill="none" stroke="#1b4de4" stroke-width="1.800"><path d="M1 1l9 8.500-9 8.500"/></svg>
      </div>
    </section>
  </aside>
</main>
<div class="scroll"></div>
<script src="chart.js"></script>
</body>
</html>
```
FILE: styles.css
```css
* { box-sizing: border-box; margin: 0; padding: 0; }
html { height: 1458px; overflow: hidden; }
body { width: 2559px; height: 1458px; overflow: hidden; position: relative; color: #fff; font-family: "Open Sans", "Noto Sans", sans-serif; background: linear-gradient(#363352 303px, #4a4463 760px, #5b5172 1150px, #62567a 1458px); white-space: nowrap; }
svg { display: block; flex: none; }

.browser-bar { height: 60px; display: flex; align-items: flex-start; border-bottom: 1px solid #42307a; background: linear-gradient(100deg, #3b2150 0, #331f52 40px, #2c2155 55px, #291f56 120px, #291d4f 165px, #291d4f 2440px, #2a1f56 2490px, #311f55 2559px); }
.nav-buttons { width: 347px; height: 58px; display: flex; gap: 30px; padding-left: 24px; align-items: center; }
.url-bar { width: 1651px; height: 48px; margin-top: 5px; border-radius: 7px; background: #2e255c; display: flex; align-items: center; padding-left: 11px; }
.url-bar svg + svg { margin-left: 20px; }
.url { margin-left: 18px; padding-top: 2px; font-size: 20px; color: #8980ae; letter-spacing: -.23px; }
.url b { font-weight: 400; color: #f3f0fc; }
.url-bar .star { margin: 0 11px 0 auto; }
.tools { height: 58px; display: flex; margin-left: 175px; }
.tools span { width: 54px; display: flex; justify-content: center; align-items: center; }
.tools .shield { position: relative; }
.shield i { position: absolute; left: 21px; top: 10px; width: 24px; height: 16px; border-radius: 3px; background: #6a6a6c; font: 700 16px/16px "Liberation Sans", sans-serif; text-align: center; }

.site-head { height: 123px; background: #322f4f; display: flex; padding-left: 337px; }
.logo { width: 90px; height: 90px; margin-top: 17px; background: #fff; color: #2a2d52; padding: 23px 0 0 7px; }
.logo span { display: inline-block; font-size: 20px; font-weight: 700; line-height: 20px; transform: scaleX(.885); transform-origin: 0 0; }
.search { width: 570px; height: 57px; margin: 33px 0 0 484px; border-radius: 29px; background: #5a5872; display: flex; align-items: center; padding: 0 15px 0 160px; justify-content: space-between; }
.search-text { font-size: 23px; padding-top: 2px; letter-spacing: -.08px; }
.locale { display: flex; align-items: center; height: 56px; margin: 39px 0 0 453px; font-size: 22px; }
.globe { margin-top: -2px; }
.gb { margin-left: 15px; width: 30px; }
.rule { width: 1px; height: 28px; background: #fff; margin-left: 16px; margin-top: -2px; }
.deg { margin-left: 15px; width: 24px; letter-spacing: .8px; }
.tri { margin-left: 23px; margin-top: -3px; }
.burger { display: flex; flex-direction: column; gap: 7px; width: 45px; margin-left: 44px; margin-top: -9px; }
.burger i { height: 5px; border-radius: 2px; background: #fff; }

.places { height: 60px; background: #5a5872; }
.place { width: 860px; height: 60px; border-right: 1px solid #777690; padding-left: 433px; display: flex; align-items: center; gap: 11px; font-size: 20.5px; letter-spacing: -.2px; }
.place-text { padding-top: 2px; }

.tabs { height: 60px; background: #1e1d2e; display: grid; grid-template-rows: 60px; grid-template-columns: 253px 262px 261px 290px 280px 186px 220px; padding-left: 415px; font-size: 23px; line-height: 62px; letter-spacing: -.02px; }
.on { position: relative; }
.on::after { content: ""; position: absolute; left: -22px; bottom: 0; width: 107px; height: 3px; background: #fff; }
.more { display: flex; letter-spacing: -.15px; padding-left: 1px; }
.more svg { margin: 22px 0 0 6px; }

main { display: flex; gap: 18px; padding: 36px 0 0 427px; }
.left { width: 1182px; display: flex; flex-direction: column; gap: 18px; }
.right { width: 507px; display: flex; flex-direction: column; gap: 18px; color: #2b2b2b; }
.card { border-radius: 8px; background: #fff; position: relative; overflow: hidden; flex: none; box-shadow: 0 0 10px rgba(0,0,0,.14); }

.current { height: 411px; }
.sky { position: absolute; inset: 0; }
.current-head { position: relative; height: 75px; background: rgba(20,20,32,.8); padding: 0 24px; display: flex; align-items: baseline; gap: 8px; line-height: 78px; }
.city { font-size: 29px; font-weight: 600; letter-spacing: -.42px; }
.asof { font-size: 27px; letter-spacing: -.57px; }
.current-body { position: relative; display: flex; justify-content: space-between; height: 251px; padding: 28px 24px 0; text-shadow: 0 2px 6px rgba(30,25,50,.45); }
.temp { font-size: 144px; line-height: 129px; transform: scaleX(.92); transform-origin: 0 0; }
.phrase { font-size: 34px; font-weight: 600; line-height: 47px; letter-spacing: -.05px; }
.hilo { font-size: 35px; font-weight: 700; line-height: 48px; letter-spacing: .15px; }
.cloud { margin-top: 65px; overflow: visible; filter: drop-shadow(0 2px 11px rgba(25,20,45,.75)); }
.warning { position: relative; margin: 13px 24px 0; height: 57px; border-radius: 8px; background: rgba(20,20,32,.82); display: flex; align-items: center; padding-left: 393px; gap: 15px; }
.warn-text { font-size: 29px; letter-spacing: -.33px; }

.rain { height: 371px; }
.rain-head { height: 131px; background: #f5f5f5; padding: 16px 38px; }
.rain h2 { font-size: 29px; font-weight: 400; line-height: 48px; color: #6a6f7c; letter-spacing: -.5px; }
.rain p { font-size: 27px; font-weight: 600; line-height: 50px; color: #303030; letter-spacing: -.82px; }
.axis-y, .axis-x { font: 20.5px "Liberation Sans", Arial, sans-serif; fill: #6f7585; }
.axis-x { fill: #252525; }

.radar { height: 301px; border-radius: 8px 8px 0 0; }
.map-label { font-size: 26px; font-weight: 600; fill: #373737; stroke: rgba(255,255,255,.75); stroke-width: 3px; paint-order: stroke; }
.iom { font-size: 28px; }
.big { font-size: 44px; fill: #222; }
.wet { fill: #1f5532; stroke: none; }
.faint { opacity: .65; }
.sea-name { font-size: 33px; font-style: italic; fill: #c3dffb; }
.time-pill { position: absolute; left: 24px; top: 15px; width: 120px; height: 34px; border-radius: 17px; background: rgba(20,22,30,.82); text-align: center; font-size: 18.5px; line-height: 34px; }
.mapbox { display: flex; align-items: center; font-weight: 700; font-family: "Lato", "Open Sans", sans-serif; letter-spacing: -.5px; }
.mb-radar { position: absolute; left: 1063px; top: 14px; gap: 5px; font-size: 23.5px; line-height: 25px; text-shadow: 0 0 3px #666; }

.storm { height: 575px; }
.storm-map { position: relative; height: 480px; margin-bottom: 23px; }
.storm-label { font-size: 17.5px; font-weight: 600; fill: #dadada; stroke: #222226; stroke-width: 2.5px; paint-order: stroke; }
.lg { font-size: 19px; }
.cuba { font-size: 25px; }
.state { font-size: 16px; fill: #6c6c6e; }
.cat { font-family: "Liberation Sans", sans-serif; font-weight: 700; fill: #bdb5ab; }
.storm-over { position: absolute; inset: 0; padding: 18px 24px 20px; color: #fff; display: flex; flex-direction: column; justify-content: space-between; }
.storm-top { display: flex; align-items: flex-start; }
.badge { width: 52px; height: 53px; border-radius: 50%; border: 2.5px solid #ff8a00; background: #4d2b05; font-weight: 700; font-size: 15px; line-height: 15px; display: flex; flex-direction: column; align-items: center; padding-top: 9px; }
.storm-name { margin-left: 15px; width: 281px; }
.hh { font-size: 22px; font-weight: 700; line-height: 29px; letter-spacing: .2px; }
.hd { font-size: 18.5px; line-height: 19px; letter-spacing: -.6px; }
.mb-storm { gap: 5px; font-size: 24px; line-height: 24px; color: #c8c8c8; padding-top: 3px; }
.stats { display: flex; line-height: 25px; }
.stats div:nth-child(1) { width: 136px; }
.stats div:nth-child(2) { width: 198px; }
.stats dt { font-size: 18px; letter-spacing: -.4px; }
.stats div:nth-child(3) dt { letter-spacing: -.9px; }
.stats dd { font-size: 21px; font-weight: 700; letter-spacing: -.4px; }
.stats div:nth-child(3) dd { letter-spacing: 0; }
.btn { display: inline-block; height: 48px; border-radius: 24px; background: #1b4de4; color: #fff; font-size: 18.500px; font-weight: 700; line-height: 48px; padding: 0 22px; margin-left: 24px; letter-spacing: -.1px; }

.right h2 { font-size: 28.500px; font-weight: 600; line-height: 39px; margin-left: 24px; letter-spacing: -.08px; }
.right h3 { font-weight: 400; }
.aqi { height: 315px; padding-top: 20px; }
.aqi-row { display: flex; padding: 21px 0 0 37px; height: 184px; }
.aqi-num { font-size: 53px; font-weight: 300; fill: #000; }
.aqi-text { margin-left: 39px; padding-top: 18px; }
.aqi-text h3 { font-size: 26px; line-height: 37px; }
.aqi-text p, .health-text p { font-size: 21px; line-height: 26px; color: #757b88; letter-spacing: -.55px; }
.aqi-text p { padding-top: 2px; }
.health { height: 194px; padding-top: 19px; border-radius: 8px 8px 0 0; }
.health-row { display: flex; padding: 32px 0 0 36px; }
.health-text { margin: -9px 0 0 29px; width: 326px; }
.health-text h3 { font-size: 26px; line-height: 30px; letter-spacing: -.17px; padding-bottom: 3px; }
.health-text p { line-height: 31px; letter-spacing: -.47px; }
.chev { margin-top: 27px; }
.scroll { position: absolute; left: 2554px; top: 78px; width: 3px; height: 362px; border-radius: 2px; background: #85858a; }
```
FILE: chart.js
```js
// Height of each quarter-hour bar, as the y of its top edge.
const tops = [1067,1067,1067,1067,1013,1067,1013,1013,1013,995,995,978,978,978,962,962,978,978,962,962,978,978,978,962,945,945,962,962];
document.getElementById('bars').innerHTML = tops.map((y, i) => {
  const x = 535 + 36 * i;
  return `<path d="M${x} 1079V${y + 9}a9 9 0 0 1 18 0V1079z"/>`;
}).join('');
let ticks = '';
for (let i = 0; i < 29; i++) {
  const major = i % 4 === 3;
  ticks += `<path d="M${526.5 + 36 * i} 1085v${major ? 10.5 : 9}" stroke="${major ? '#444' : '#8d8d8d'}"/>`;
}
document.getElementById('ticks').innerHTML = ticks;
```
